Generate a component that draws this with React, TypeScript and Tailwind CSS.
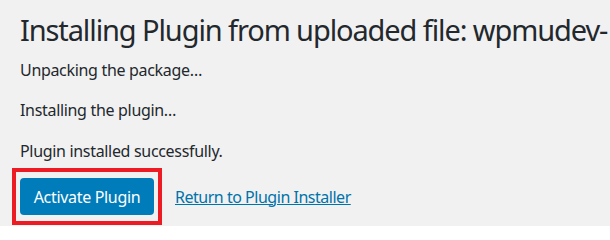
export default function App() {
  return (
    <div
      className="h-[226px] w-full overflow-hidden bg-[#f1f1f1] pl-5 pt-[10px] text-[#23282d]"
      style={{ fontFamily: '"Noto Sans", "Open Sans", sans-serif' }}
    >
      <h1 className="whitespace-nowrap text-[29px] font-normal leading-[40px] tracking-[-0.038em]">
        Installing Plugin from uploaded file: wpmudev-
      </h1>

      <p className="mt-[10px] text-[16px] leading-[20px] tracking-[-0.02em]">Unpacking the package…</p>
      <p className="mt-[20px] text-[16px] leading-[20px] tracking-[-0.02em]">Installing the plugin…</p>
      <p className="mt-[21px] text-[16px] leading-[20px] tracking-[-0.02em]">Plugin installed successfully.</p>

      <div className="mt-[7px] -ml-2 flex items-center">
        <div className="border-4 border-[#ed1c24] px-1 py-[6px]">
          <button className="h-[37px] w-[134px] rounded-[4px] bg-[#007cba] text-[16px] tracking-[-0.02em] text-white">
            Activate Plugin
          </button>
        </div>
        <a href="#" className="ml-[13px] text-[16px] tracking-[-0.03em] text-[#0073aa] underline">
          Return to Plugin Installer
        </a>
      </div>
    </div>
  )
}
